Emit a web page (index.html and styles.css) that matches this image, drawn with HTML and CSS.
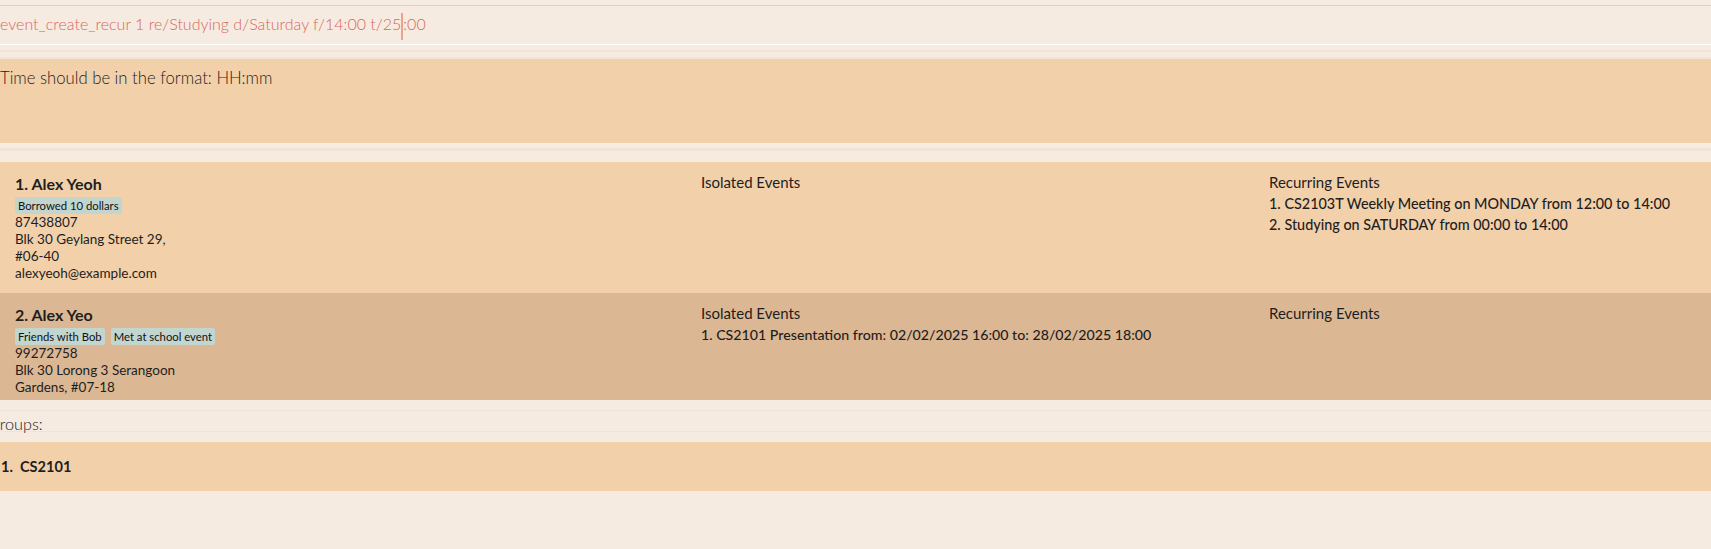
FILE: index.html
```html
<!DOCTYPE html>
<html lang="en">
<head>
<meta charset="utf-8">
<title>Address Book</title>
<link rel="stylesheet" href="styles.css">
</head>
<body>
<div class="app">
  <div class="command-box">
    <div class="command-field"><span>event_create_recur 1 re/Studying d/Saturday f/14:00 t/25</span><span class="caret"></span><span>:00</span></div>
  </div>
  <div class="split split-top"></div>
  <div class="result">Time should be in the format: HH:mm</div>
  <div class="split split-mid"></div>
  <div class="person-list">
    <div class="card">
      <div class="col col-person">
        <div class="name">1. Alex Yeoh</div>
        <div class="tags"><span class="tag">Borrowed 10 dollars</span></div>
        <div class="line">87438807</div>
        <div class="line">Blk 30 Geylang Street 29,<br>#06-40</div>
        <div class="line">alexyeoh@example.com</div>
      </div>
      <div class="col col-events">
        <div class="ev-title">Isolated Events</div>
      </div>
      <div class="col col-events">
        <div class="ev-title">Recurring Events</div>
        <div class="ev-item">1. CS2103T Weekly Meeting on MONDAY from 12:00 to 14:00</div>
        <div class="ev-item">2. Studying on SATURDAY from 00:00 to 14:00</div>
      </div>
    </div>
    <div class="card card-alt">
      <div class="col col-person">
        <div class="name">2. Alex Yeo</div>
        <div class="tags"><span class="tag">Friends with Bob</span><span class="tag">Met at school event</span></div>
        <div class="line">99272758</div>
        <div class="line">Blk 30 Lorong 3 Serangoon<br>Gardens, #07-18</div>
      </div>
      <div class="col col-events">
        <div class="ev-title">Isolated Events</div>
        <div class="ev-item ev-dates">1. CS2101 Presentation from: 02/02/2025 16:00 to: 28/02/2025 18:00</div>
      </div>
      <div class="col col-events">
        <div class="ev-title">Recurring Events</div>
      </div>
    </div>
  </div>
  <div class="groups-head"><span class="groups-label">Groups:</span></div>
  <div class="group-list">
    <div class="group-card"><span class="g-index">1.</span><span class="g-name">CS2101</span></div>
  </div>
</div>
</body>
</html>
```
FILE: styles.css
```css
html, body {
  margin: 0;
  padding: 0;
}
body {
  background: #f5ebe1;
  font-family: Lato, "Open Sans", sans-serif;
  color: #1f1f1f;
  width: 1711px;
  height: 549px;
  overflow: hidden;
}
.app {
  display: flex;
  flex-direction: column;
}
.command-box {
  margin-top: 5px;
  border-top: 1px solid #f0cca6;
  border-bottom: 1px solid #ffffff;
  height: 38px;
  box-sizing: content-box;
}
.command-field {
  display: flex;
  align-items: center;
  padding-top: 8px;
  height: 20px;
  line-height: 20px;
  font-size: 16px;
  font-weight: 300;
  color: #dc665e;
  white-space: pre;
}
.caret {
  display: inline-block;
  width: 2px;
  height: 27px;
  background: #eba28f;
  margin-top: 4px;
}
.split-top {
  height: 14px;
  background: linear-gradient(#f5ebe1 0 5px, #f1e3d5 5px 7px, #f5ebe1 7px 12px, #f1e3d5 12px 14px);
}
.split-mid {
  height: 19px;
  background: linear-gradient(#f8efe6 0 1px, #f5ebe1 1px 5px, #f1e3d5 5px 8px, #f5ebe1 8px 19px);
}
.result {
  height: 84px;
  box-sizing: border-box;
  background: #f2d0aa;
  padding-top: 9px;
  font-size: 16.7px;
  line-height: 20px;
  font-weight: 300;
  color: #1c1c1c;
}
.person-list {
  height: 238px;
  overflow: hidden;
}
.card {
  display: grid;
  grid-template-columns: 686px 568px 1fr;
  padding-left: 15px;
  background: #f2d0aa;
}
.card-alt {
  background: #dcb793;
}
.col-person {
  padding-top: 12px;
  padding-bottom: 11px;
}
.name {
  font-size: 16px;
  font-weight: 700;
  line-height: 20px;
  color: #1e1e1e;
}
.tags {
  display: flex;
  gap: 6px;
  margin-top: 3px;
}
.tag {
  background: #c2d6cf;
  border-radius: 2px;
  padding: 1px 3px;
  font-size: 11.3px;
  line-height: 15px;
  color: #111;
}
.line {
  font-size: 13.5px;
  line-height: 17px;
  color: #1e1e1e;
}
.col-events {
  padding-top: 10px;
}
.ev-title, .ev-item {
  font-size: 15px;
  line-height: 21px;
  color: #1e1e1e;
}
.ev-item {
  font-size: 14.4px;
  font-weight: 500;
}
.ev-dates {
  font-size: 14.2px;
}
.groups-head {
  height: 42px;
  box-sizing: border-box;
  background: linear-gradient(#f5ebe1 0 10px, #f1e4d7 10px 11px, #f5ebe1 11px 31px, #f1e4d7 31px 32px, #f5ebe1 32px 42px);
  padding-top: 17px;
  overflow: hidden;
}
.groups-label {
  display: block;
  margin-left: -12px;
  font-size: 16.2px;
  font-weight: 300;
  line-height: 14px;
  color: #1c1c1c;
}
.group-card {
  height: 49px;
  box-sizing: border-box;
  background: #f2d0aa;
  display: flex;
  align-items: center;
  padding-left: 1px;
  gap: 7px;
  font-size: 14.6px;
  font-weight: 700;
  color: #1e1e1e;
}
```
